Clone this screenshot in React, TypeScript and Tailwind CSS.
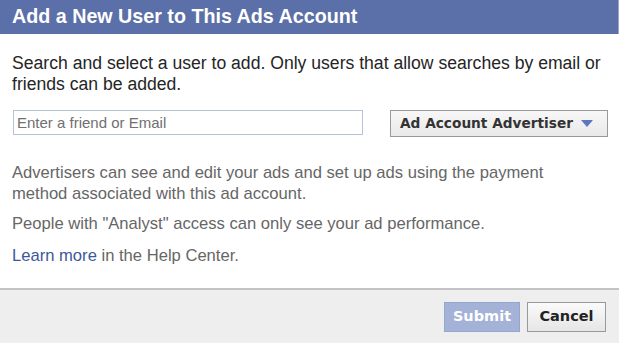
export default function App() {
  return (
    <div className="w-[620px] h-[345px] bg-white overflow-hidden" style={{ fontFamily: '"Liberation Sans", Arial, sans-serif' }}>
      <div className="w-[619px] h-[34px] bg-[#5b6fa8] border-r border-[#9aa8cc] flex items-center pl-[12px]">
        <span className="text-white font-bold text-[19.7px] leading-none">Add a New User to This Ads Account</span>
      </div>
      <div className="h-[254px] px-[12px] pt-[19px]">
        <p className="text-[17.6px] leading-[21px] text-[#252525]">
          Search and select a user to add. Only users that allow searches by email or friends can be added.
        </p>
        <div className="flex items-start mt-[15px] h-[27px]">
          <input
            className="w-[350px] h-[25px] ml-[1px] border border-[#b7c2da] px-[3px] text-[15px] text-[#333] placeholder:text-[#707070] outline-none"
            placeholder="Enter a friend or Email"
          />
          <button
            className="ml-[27px] w-[218px] h-[27px] border border-[#999] bg-gradient-to-b from-[#f7f7f7] to-[#e9e9e9] flex items-center pl-[9px] text-[13.7px] font-bold text-[#333]"
            style={{ fontFamily: '"DejaVu Sans", sans-serif' }}
          >
            <span>Ad Account Advertiser</span>
            <svg width="12" height="7" viewBox="0 0 12 7" className="ml-[8px]">
              <polygon points="0,0 12,0 6,7" fill="#5a77c0" />
            </svg>
          </button>
        </div>
        <div className="mt-[25px] text-[16.6px] leading-[21px] text-[#666]">
          <p>Advertisers can see and edit your ads and set up ads using the payment<br />method associated with this ad account.</p>
          <p className="mt-[9px]">People with "Analyst" access can only see your ad performance.</p>
          <p className="mt-[11px]"><span className="text-[#3b5998]">Learn more</span> in the Help Center.</p>
        </div>
      </div>
      <div className="w-[619px] h-[55px] bg-[#eeeeee] border-t-2 border-[#c4c4c4] flex items-start justify-end pr-[13px] pt-[12px] gap-[7px]">
        <button
          className="w-[76px] h-[30px] bg-[#a3b2d6] border border-[#94a6cf] text-white font-bold text-[14.5px]"
          style={{ fontFamily: '"DejaVu Sans", sans-serif' }}
        >
          Submit
        </button>
        <button
          className="w-[79px] h-[30px] bg-gradient-to-b from-[#fafafa] to-[#e6e6e6] border border-[#999] text-[#222] font-bold text-[14.5px]"
          style={{ fontFamily: '"DejaVu Sans", sans-serif' }}
        >
          Cancel
        </button>
      </div>
    </div>
  );
}
